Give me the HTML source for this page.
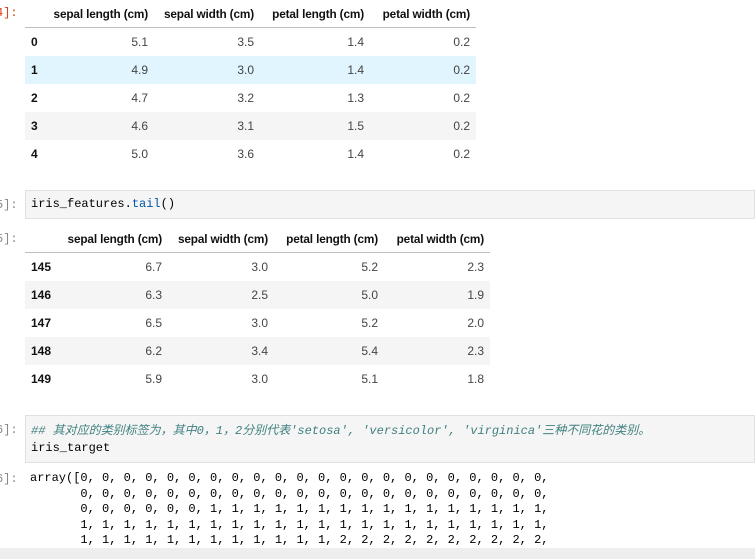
<!DOCTYPE html>
<html><head><meta charset="utf-8"><style>
body{margin:0;width:755px;height:559px;overflow:hidden;background:#fff;position:relative;font-family:"Liberation Sans",sans-serif;}
.p{position:absolute;font-family:"Liberation Mono",monospace;font-size:12px;color:#d84315;}
table{position:absolute;border-collapse:collapse;font-size:12px;color:#444;table-layout:fixed;}
th,td{padding:0 6px;text-align:right;height:28px;white-space:nowrap;}
thead th{height:26px;border-bottom:1px solid #bdbdbd;font-weight:bold;color:#111;font-size:11.8px;letter-spacing:-0.15px;}
tbody th{text-align:left;font-weight:bold;color:#111;}
tr.g{background:#f5f5f5}tr.b{background:#e1f5fe}
.code{position:absolute;left:25px;right:0;background:#f5f5f5;border:1px solid #e0e0e0;font-family:"Liberation Mono","Noto Sans CJK SC",monospace;font-size:12px;color:#000;}
.cm{color:#408080;font-style:italic}
.fn{color:#0055aa}
pre{margin:0;position:absolute;font-family:"Liberation Mono",monospace;font-size:12px;line-height:15.5px;color:#000;}
</style></head><body>
<div class="p" style="left:-4px;top:6px">4]:</div>
<table style="left:25px;top:1px;width:451px">
<colgroup><col style="width:19px"><col style="width:110px"><col style="width:106px"><col style="width:110px"><col style="width:106px"></colgroup>
<thead><tr><th></th><th>sepal length (cm)</th><th>sepal width (cm)</th><th>petal length (cm)</th><th>petal width (cm)</th></tr></thead>
<tbody>
<tr><th>0</th><td>5.1</td><td>3.5</td><td>1.4</td><td>0.2</td></tr>
<tr class="b"><th>1</th><td>4.9</td><td>3.0</td><td>1.4</td><td>0.2</td></tr>
<tr><th>2</th><td>4.7</td><td>3.2</td><td>1.3</td><td>0.2</td></tr>
<tr class="g"><th>3</th><td>4.6</td><td>3.1</td><td>1.5</td><td>0.2</td></tr>
<tr><th>4</th><td>5.0</td><td>3.6</td><td>1.4</td><td>0.2</td></tr>
</tbody></table>

<div class="p" style="left:-4px;top:198px;color:#888">5]:</div>
<div class="code" style="top:190px;height:27px"><div style="position:absolute;left:5px;top:6px">iris_features.<span class="fn">tail</span>()</div></div>

<div class="p" style="left:-4px;top:232px;color:#888">5]:</div>
<table style="left:25px;top:226px;width:465px">
<colgroup><col style="width:33px"><col style="width:110px"><col style="width:106px"><col style="width:110px"><col style="width:106px"></colgroup>
<thead><tr><th></th><th>sepal length (cm)</th><th>sepal width (cm)</th><th>petal length (cm)</th><th>petal width (cm)</th></tr></thead>
<tbody>
<tr><th>145</th><td>6.7</td><td>3.0</td><td>5.2</td><td>2.3</td></tr>
<tr class="g"><th>146</th><td>6.3</td><td>2.5</td><td>5.0</td><td>1.9</td></tr>
<tr><th>147</th><td>6.5</td><td>3.0</td><td>5.2</td><td>2.0</td></tr>
<tr class="g"><th>148</th><td>6.2</td><td>3.4</td><td>5.4</td><td>2.3</td></tr>
<tr><th>149</th><td>5.9</td><td>3.0</td><td>5.1</td><td>1.8</td></tr>
</tbody></table>

<div class="p" style="left:-4px;top:423px;color:#888">6]:</div>
<div class="code" style="top:415px;height:46px"><div style="position:absolute;left:5px;top:7px;line-height:17px"><span class="cm">## 其对应的类别标签为，其中0，1，2分别代表'setosa', 'versicolor', 'virginica'三种不同花的类别。</span><br>iris_target</div></div>

<div class="p" style="left:-4px;top:472px;color:#888">6]:</div>
<pre style="left:30px;top:471px">array([0, 0, 0, 0, 0, 0, 0, 0, 0, 0, 0, 0, 0, 0, 0, 0, 0, 0, 0, 0, 0, 0,
       0, 0, 0, 0, 0, 0, 0, 0, 0, 0, 0, 0, 0, 0, 0, 0, 0, 0, 0, 0, 0, 0,
       0, 0, 0, 0, 0, 0, 1, 1, 1, 1, 1, 1, 1, 1, 1, 1, 1, 1, 1, 1, 1, 1,
       1, 1, 1, 1, 1, 1, 1, 1, 1, 1, 1, 1, 1, 1, 1, 1, 1, 1, 1, 1, 1, 1,
       1, 1, 1, 1, 1, 1, 1, 1, 1, 1, 1, 1, 2, 2, 2, 2, 2, 2, 2, 2, 2, 2,</pre>
<div style="position:absolute;left:0;right:0;top:548px;height:11px;background:#eeeeee"></div>
</body></html>
